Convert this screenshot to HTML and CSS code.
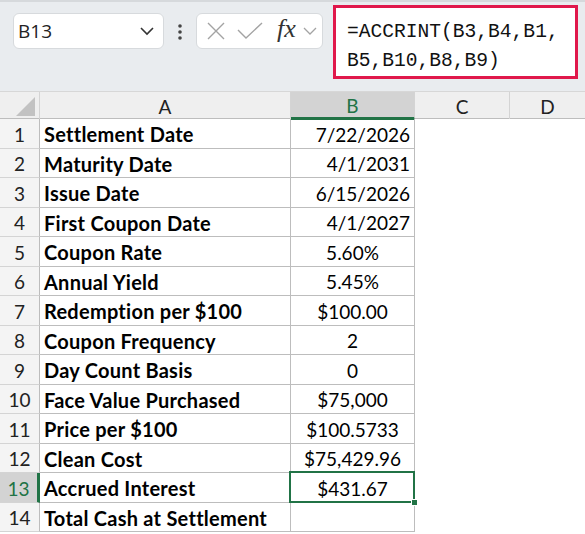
FILE: index.html
```html
<!DOCTYPE html>
<html lang="en">
<head>
    <meta charset="UTF-8">
    <meta name="viewport" content="width=device-width, initial-scale=1.0">
    <title>Bond Purchase - ACCRINT</title>
    <link rel="stylesheet" href="styles.css">
</head>
<body>
    <div class="toolbar">
        <div class="name-box">
            <span>B13</span>
            <svg class="chev" width="16" height="10" viewBox="0 0 16 10"><path d="M2 2 L8 8 L14 2" fill="none" stroke="#333" stroke-width="1.6"/></svg>
        </div>
        <svg class="dots" width="6" height="20" viewBox="0 0 6 20"><circle cx="3" cy="4" r="1.8"/><circle cx="3" cy="10" r="1.8"/><circle cx="3" cy="16" r="1.8"/></svg>
        <div class="fn-box">
            <svg width="18" height="18" viewBox="0 0 18 18"><path d="M1 1 L17 17 M17 1 L1 17" stroke="#a3a3a3" stroke-width="1.4" fill="none"/></svg>
            <svg width="26" height="20" viewBox="0 0 26 20"><path d="M1 9 L9 17 L25 2" stroke="#a3a3a3" stroke-width="1.4" fill="none"/></svg>
            <span class="fx">fx</span>
            <svg width="14" height="10" viewBox="0 0 14 10"><path d="M1 2 L7 8 L13 2" fill="none" stroke="#a3a3a3" stroke-width="1.3"/></svg>
        </div>
        <div class="formula">=ACCRINT(B3,B4,B1,<br>B5,B10,B8,B9)</div>
    </div>

    <div class="sheet">
        <div class="row head">
            <div class="corner"><span class="tri"></span></div>
            <div class="col">A</div>
            <div class="col active">B</div>
            <div class="col">C</div>
            <div class="col last">D</div>
        </div>
        <div class="row"><div class="num">1</div><div class="lbl">Settlement Date</div><div class="val right">7/22/2026</div><div></div><div></div></div>
        <div class="row"><div class="num">2</div><div class="lbl">Maturity Date</div><div class="val right">4/1/2031</div><div></div><div></div></div>
        <div class="row"><div class="num">3</div><div class="lbl">Issue Date</div><div class="val right">6/15/2026</div><div></div><div></div></div>
        <div class="row"><div class="num">4</div><div class="lbl">First Coupon Date</div><div class="val right">4/1/2027</div><div></div><div></div></div>
        <div class="row"><div class="num">5</div><div class="lbl">Coupon Rate</div><div class="val">5.60%</div><div></div><div></div></div>
        <div class="row"><div class="num">6</div><div class="lbl">Annual Yield</div><div class="val">5.45%</div><div></div><div></div></div>
        <div class="row"><div class="num">7</div><div class="lbl">Redemption per $100</div><div class="val">$100.00</div><div></div><div></div></div>
        <div class="row"><div class="num">8</div><div class="lbl">Coupon Frequency</div><div class="val">2</div><div></div><div></div></div>
        <div class="row"><div class="num">9</div><div class="lbl">Day Count Basis</div><div class="val">0</div><div></div><div></div></div>
        <div class="row"><div class="num">10</div><div class="lbl">Face Value Purchased</div><div class="val">$75,000</div><div></div><div></div></div>
        <div class="row"><div class="num">11</div><div class="lbl">Price per $100</div><div class="val">$100.5733</div><div></div><div></div></div>
        <div class="row"><div class="num">12</div><div class="lbl">Clean Cost</div><div class="val">$75,429.96</div><div></div><div></div></div>
        <div class="row"><div class="num active">13</div><div class="lbl">Accrued Interest</div><div class="val selected">$431.67<span class="handle"></span></div><div></div><div></div></div>
        <div class="row"><div class="num">14</div><div class="lbl">Total Cash at Settlement</div><div class="val"></div><div></div><div></div></div>
    </div>
</body>
</html>
```

FILE: styles.css
```css
* {
    box-sizing: border-box;
}

body {
    margin: 0;
    background-color: #fff;
    font-family: Lato, "Open Sans", sans-serif;
    overflow: hidden;
}

/* formula bar */
.toolbar {
    height: 91px;
    display: flex;
    align-items: flex-start;
    background-color: #e9ecef;
    border-top: 2px solid #d6d9dc;
    padding-left: 13px;
}

.name-box {
    width: 151px;
    height: 36px;
    margin-top: 11px;
    display: flex;
    align-items: center;
    justify-content: space-between;
    padding: 0 8px 0 4px;
    background-color: #fff;
    border: 1px solid #d7dadd;
    border-radius: 6px;
    font-family: "Open Sans", sans-serif;
    font-size: 19px;
    color: #222;
}

.dots {
    margin: 20px 0 0 13px;
    fill: #444;
}

.fn-box {
    width: 127px;
    height: 36px;
    margin: 11px 0 0 13px;
    display: flex;
    align-items: center;
    gap: 12px;
    padding-left: 10px;
    background-color: #fff;
    border: 1px solid #d7dadd;
    border-radius: 6px;
}

.fx {
    font-family: "Liberation Serif", serif;
    font-style: italic;
    font-size: 26px;
    color: #333;
    margin-left: 2px;
    margin-right: -5px;
    margin-top: -4px;
}

.formula {
    width: 245px;
    height: 74px;
    margin: 3px 0 0 10px;
    padding: 10px 0 0 11px;
    background-color: #fff;
    border: 3px solid #e0184b;
    font-family: "Liberation Mono", monospace;
    font-size: 19.6px;
    line-height: 29px;
    color: #111;
}

/* grid */
.row {
    display: grid;
    grid-template-columns: 40px 251px 124px 95px 1fr;
    height: 29.5px;
}

.row > div {
    display: flex;
    align-items: center;
    padding-top: 2px;
    font-size: 19px;
    color: #000;
}

.head {
    height: 28px;
    background-color: #efefef;
    border-top: 1px solid #d7d7d7;
    border-bottom: 1px solid #bdbdbd;
}

.head > div {
    justify-content: center;
    border-right: 1px solid #d4d4d4;
    color: #222;
}

.head .col.last {
    border-right: none;
}

.head .col.active {
    background-color: #d3d3d3;
    color: #217346;
    border-bottom: 3px solid #217346;
    margin-bottom: -1px;
}

.corner {
    position: relative;
}

.tri {
    position: absolute;
    right: 4px;
    bottom: 3px;
    width: 19px;
    height: 19px;
    background-color: #c2c2c2;
    clip-path: polygon(100% 0, 100% 100%, 0 100%);
}

.num {
    justify-content: center;
    background-color: #f4f4f4;
    border-right: 1px solid #bdbdbd;
    border-bottom: 1px solid #d4d4d4;
    color: #222 !important;
}

.num.active {
    background-color: #d3d3d3;
    color: #217346 !important;
    border-right: 3px solid #217346;
}

.lbl {
    font-weight: bold;
    font-size: 20px !important;
    letter-spacing: 0.25px;
    padding-left: 4px;
    border-right: 1px solid #bdbdbd;
    border-bottom: 1px solid #bdbdbd;
    white-space: nowrap;
}

.val {
    justify-content: center;
    border-right: 1px solid #bdbdbd;
    border-bottom: 1px solid #bdbdbd;
}

.val.right {
    justify-content: flex-end;
    padding-right: 4px;
}

.val.selected {
    position: relative;
}

.val.selected::after {
    content: "";
    position: absolute;
    left: -2px;
    top: -2px;
    right: -1px;
    bottom: -1px;
    border: 2px solid #217346;
}

.handle {
    position: absolute;
    right: -4px;
    bottom: -4px;
    width: 7px;
    height: 7px;
    background-color: #217346;
    border: 1px solid #fff;
    z-index: 1;
}
```
